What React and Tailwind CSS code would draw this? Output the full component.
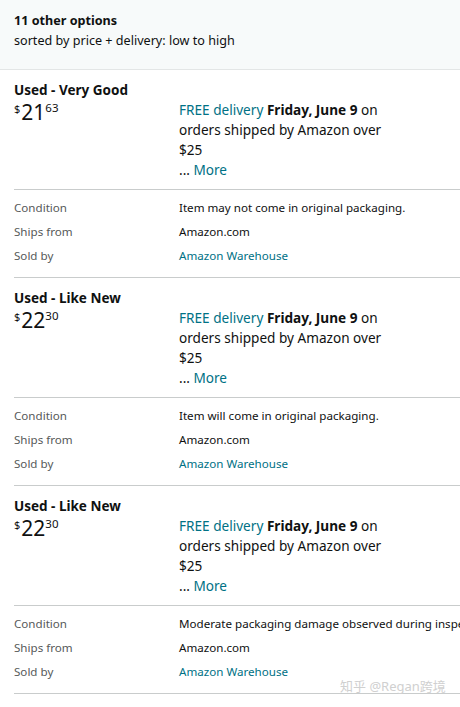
import React from "react";

const offers = [
  {
    condition: "Used - Very Good",
    dollars: "21",
    cents: "63",
    note: "Item may not come in original packaging.",
  },
  {
    condition: "Used - Like New",
    dollars: "22",
    cents: "30",
    note: "Item will come in original packaging.",
  },
  {
    condition: "Used - Like New",
    dollars: "22",
    cents: "30",
    note: "Moderate packaging damage observed during inspection. Item is in original condition.",
  },
];

const Offer = ({ offer }) => {
  return (
    <div className="ml-[14px] border-b border-[#c9cccc]">
      <div className="pt-[10px] pb-[9px] border-b border-[#c9cccc]">
        <div className="text-[13.5px] leading-[20px] font-bold text-[#0f1111]">{offer.condition}</div>
        <div className="flex">
          <div className="w-[165px] shrink-0 text-[#0f1111] flex items-start">
            <span className="text-[11px] leading-[14px] mt-[2px]">$</span>
            <span className="text-[21px] leading-[24px] ml-[1px]">{offer.dollars}</span>
            <span className="text-[11.5px] leading-[14px] mt-[1px]">{offer.cents}</span>
          </div>
          <div className="w-[215px] text-[13.6px] leading-[20px] text-[#0f1111]">
            <span className="text-[#007185]">FREE delivery</span>{" "}
            <span className="font-bold">Friday, June 9</span> on orders shipped by Amazon over $25
            <div>
              ... <span className="text-[#007185]">More</span>
            </div>
          </div>
        </div>
      </div>
      <div className="pt-[6px] pb-[9px] text-[11.6px] leading-[24px]">
        <div className="flex">
          <div className="w-[165px] shrink-0 text-[#565959]">Condition</div>
          <div className="whitespace-nowrap overflow-hidden text-[#0f1111]">{offer.note}</div>
        </div>
        <div className="flex">
          <div className="w-[165px] shrink-0 text-[#565959]">Ships from</div>
          <div className="text-[#0f1111]">Amazon.com</div>
        </div>
        <div className="flex">
          <div className="w-[165px] shrink-0 text-[#565959]">Sold by</div>
          <div className="text-[#007185]">Amazon Warehouse</div>
        </div>
      </div>
    </div>
  );
};

export default function App() {
  return (
    <div
      className="relative w-[460px] h-[707px] overflow-hidden bg-white"
      style={{ fontFamily: '"Noto Sans", "Noto Sans CJK SC", sans-serif' }}
    >
      <div className="h-[70px] bg-[#f7fafa] border-b border-[#e3e6e6] px-[14px] pt-[11px]">
        <div className="text-[12.6px] leading-[20px] font-bold text-[#0f1111]">11 other options</div>
        <div className="text-[12.6px] leading-[20px] text-[#0f1111]">sorted by price + delivery: low to high</div>
      </div>
      {offers.map((o, i) => (
        <Offer key={i} offer={o} />
      ))}
      <div className="absolute left-[340px] top-[677px] text-[13px] text-[#d0d0d0] whitespace-nowrap">
        知乎 @Regan跨境
      </div>
    </div>
  );
}
